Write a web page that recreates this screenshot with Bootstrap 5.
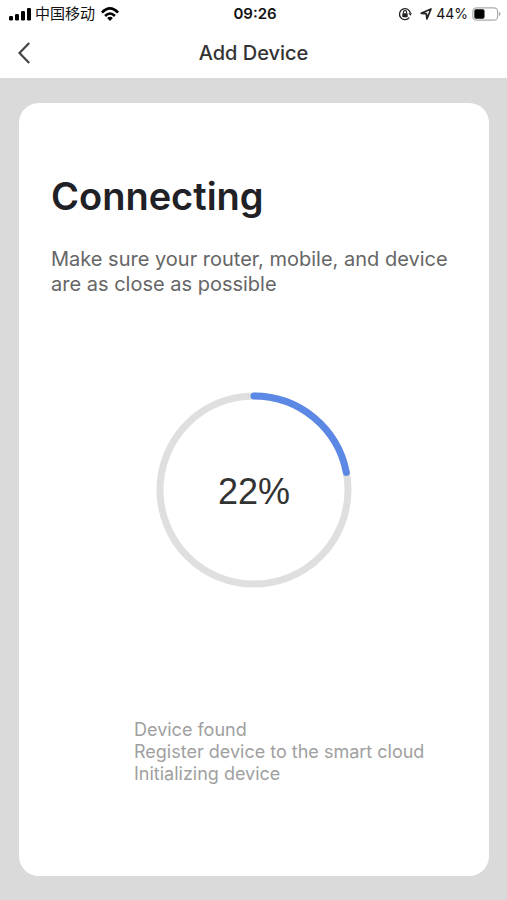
<!DOCTYPE html>
<html lang="en">
<head>
<meta charset="utf-8">
<meta name="viewport" content="width=device-width, initial-scale=1">
<title>Add Device</title>
<link href="https://cdn.jsdelivr.net/npm/bootstrap@5.3.0/dist/css/bootstrap.min.css" rel="stylesheet">
<style>
body { font-family: Inter, "Noto Sans CJK SC", sans-serif; background: #dadada; color: #333; }
svg { display: block; flex: none; }
.status-bar { height: 28px; padding: 0 6px 0 9px; font-size: 14px; line-height: 20px; color: #111; }
.clock, .carrier { font-size: 15px; }
.clock { font-weight: 600; }
.side { flex: 1 1 0; }
.title-bar { height: 50px; padding: 0 16px; }
.back-btn { width: 32px; height: 32px; color: #444; }
.page-title { font-size: 20px; line-height: 28px; font-weight: 500; color: #333; }
.panel { margin: 25px 18px 24px 19px; padding: 69px 32px 91px; border: 0; border-radius: 20px; }
.headline { font-size: 38px; line-height: 48px; font-weight: 600; color: #1f2126; margin-bottom: 27px; }
.hint { font-size: 20px; line-height: 25px; color: #666; }
.ring { display: grid; place-items: center; margin-bottom: 37px; }
.ring > * { grid-area: 1 / 1; }
.percent { font: 36px/40px "Liberation Sans", sans-serif; color: #333; padding-top: 4px; }
.steps { font-size: 18px; line-height: 22px; color: #a0a0a0; padding-left: 83px; }
</style>
</head>
<body class="d-flex flex-column min-vh-100">
<header class="bg-white">
  <div class="status-bar d-flex align-items-center">
    <div class="side d-flex align-items-center">
      <svg width="22" height="14" viewBox="0 0 22 14" fill="#000" aria-hidden="true"><rect x="0" y="9" width="4" height="4.500" rx="1.300"/><rect x="6" y="7" width="4" height="6.500" rx="1.200"/><rect x="12" y="4" width="4" height="9.500" rx="1.200"/><rect x="18" y="1" width="4" height="12.500" rx="1.200"/></svg>
      <span class="carrier ms-1 text-nowrap" lang="zh-CN">中国移动</span>
      <svg class="ms-1" width="22" height="16" viewBox="0 0 22 16" fill="none" stroke="#000" stroke-width="2.600" aria-label="Wi-Fi"><path d="M2.900 6.600Q11 -1.800 19.100 6.600"/><path d="M6.100 10Q11 5 15.900 10"/><path d="M8.100 11.900Q11 9.500 13.900 11.900L11 14.900Z" fill="#000" stroke="none"/></svg>
    </div>
    <span class="clock">09:26</span>
    <div class="side d-flex align-items-center justify-content-end">
      <svg width="14" height="14" viewBox="0 0 14 14" fill="none" stroke="#222" aria-hidden="true"><path d="M11.300 10.600A5.500 5.500 0 1 1 12.400 6.100" stroke-width="1.300"/><path d="M10.400 6.200h3.600l-1.600 2.500z" fill="#222" stroke="none"/><rect x="4.300" y="6.300" width="5.400" height="3.900" rx=".7" fill="#222" stroke="none"/><path d="M5.400 6.500V5.200a1.600 1.600 0 0 1 3.200 0v1.300" stroke-width="1.100"/></svg>
      <svg class="ms-2" width="12" height="12" viewBox="0 0 12 12" fill="none" stroke="#222" stroke-width="1.700" stroke-linejoin="round" aria-hidden="true"><path d="M1.200 5.300 11 1 6.900 10.900 6.300 5.700z"/></svg>
      <span class="ms-1">44%</span>
      <svg class="ms-1" width="29" height="14" viewBox="0 0 29 14" aria-hidden="true"><rect x=".8" y=".8" width="24.800" height="12.400" rx="3.800" fill="#fff" stroke="#aaa" stroke-width="1.200"/><rect x="2.300" y="2.300" width="10.200" height="9.400" rx="1.700"/><path d="M27 4.800q3.200 2.200 0 4.400z" fill="#aaa"/></svg>
    </div>
  </div>
  <div class="title-bar d-flex align-items-center">
    <div class="side"><button type="button" class="back-btn btn p-0 border-0" aria-label="Back"><svg width="16" height="24" viewBox="0 0 16 24" fill="none" stroke="currentColor" stroke-width="2.200"><path d="M13.200 2 3.500 12l9.700 10"/></svg></button></div>
    <h1 class="page-title m-0">Add Device</h1>
    <div class="side"></div>
  </div>
</header>
<main class="panel card flex-grow-1 justify-content-between">
  <div>
    <h2 class="headline">Connecting</h2>
    <p class="hint m-0">Make sure your router, mobile, and device are as close as possible</p>
  </div>
  <div class="ring" role="progressbar" aria-label="Connection progress" aria-valuenow="22" aria-valuemin="0" aria-valuemax="100">
    <svg width="196" height="196" viewBox="0 0 196 196" fill="none" stroke-width="7"><circle cx="98" cy="98" r="94" stroke="#dfdfdf"/><circle cx="98" cy="98" r="94" stroke="#5b87e5" stroke-linecap="round" pathLength="100" stroke-dasharray="22 78" transform="rotate(-90 98 98)"/></svg>
    <span class="percent">22%</span>
  </div>
  <ul class="steps list-unstyled m-0">
    <li>Device found</li>
    <li>Register device to the smart cloud</li>
    <li>Initializing device</li>
  </ul>
</main>
<script src="https://cdn.jsdelivr.net/npm/bootstrap@5.3.0/dist/js/bootstrap.bundle.min.js"></script>
</body>
</html>
